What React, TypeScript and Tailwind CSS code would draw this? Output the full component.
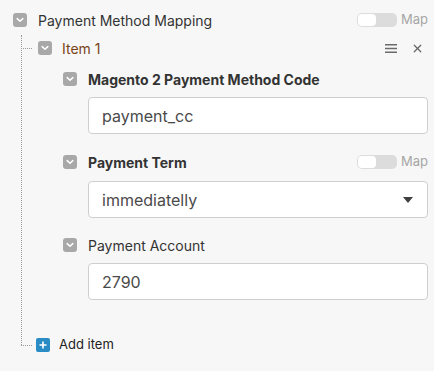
import { X } from "lucide-react";

type Field = {
  label: string;
  value: string;
  bold: boolean;
  mapToggle: boolean;
  select: boolean;
};

const fields: Field[] = [
  { label: "Magento 2 Payment Method Code", value: "payment_cc", bold: true, mapToggle: false, select: false },
  { label: "Payment Term", value: "immediatelly", bold: true, mapToggle: true, select: true },
  { label: "Payment Account", value: "2790", bold: false, mapToggle: false, select: false },
];

function Collapse() {
  return (
    <span className="flex h-[14px] w-[14px] shrink-0 items-center justify-center rounded-[3px] bg-[#a8a8a8]">
      <svg width="8" height="6" viewBox="0 0 8 6" fill="none">
        <path d="M1.2 1.6 4 4.3 6.8 1.6" stroke="#ffffff" strokeWidth="1.5" strokeLinecap="round" strokeLinejoin="round" />
      </svg>
    </span>
  );
}

function MapToggle() {
  return (
    <div className="ml-auto flex items-center">
      <span className="flex h-[14px] w-[40px] items-center rounded-[5px] bg-[#dcdcdc] px-[1px]">
        <span className="h-[12px] w-[18px] rounded-[4px] bg-white" />
      </span>
      <span className="ml-[4px] text-[13px] text-[#a6a6a6]">Map</span>
    </div>
  );
}

export default function App() {
  return (
    <div className="min-h-screen bg-[#f7f7f7] pl-[13px] pr-[6px] pt-[13px] font-['Inter',sans-serif] text-[#333333]">
      <div className="flex h-[14px] items-center">
        <Collapse />
        <span className="ml-[11px] text-[14px]">Payment Method Mapping</span>
        <MapToggle />
      </div>

      <div className="relative ml-[8px] mt-[8px] pt-[6px]">
        <span className="absolute bottom-[7px] left-0 top-0 border-l border-dotted border-[#9a9a9a]" />

        <div className="flex h-[14px] items-center">
          <span className="w-[11px] border-t border-dotted border-[#9a9a9a]" />
          <span className="ml-[6px]">
            <Collapse />
          </span>
          <span className="ml-[10px] text-[14px] text-[#7a4419]">Item 1</span>
          <div className="ml-auto mr-[4px] flex items-center gap-[14px] text-[#666666]">
            <svg width="12" height="9" viewBox="0 0 12 9">
              <rect x="0" y="0" width="12" height="1.5" fill="#6b6b6b" />
              <rect x="0" y="3.75" width="12" height="1.5" fill="#6b6b6b" />
              <rect x="0" y="7.5" width="12" height="1.5" fill="#6b6b6b" />
            </svg>
            <X size={13} strokeWidth={2.2} />
          </div>
        </div>

        <div className="pl-[42px] pt-[17px]">
          {fields.map((f, i) => (
            <div key={f.label} className={i === 0 ? "" : i === 1 ? "mt-[21px]" : "mt-[20px]"}>
              <div className="flex h-[14px] items-center">
                <Collapse />
                <span className={`ml-[11px] text-[14px] ${f.bold ? "font-bold" : ""}`}>{f.label}</span>
                {f.mapToggle ? <MapToggle /> : null}
              </div>
              <div
                className={`ml-[25px] flex h-[37px] items-center rounded-[4px] border border-[#cfcfcf] bg-white pl-[13px] pr-[14px] text-[16px] text-[#4a4a4a] ${
                  f.select ? "mt-[12px]" : "mt-[11px]"
                }`}
              >
                <span>{f.value}</span>
                {f.select ? (
                  <svg className="ml-auto" width="10" height="6" viewBox="0 0 10 6">
                    <path d="M0 0h10L5 6z" fill="#404040" />
                  </svg>
                ) : null}
              </div>
            </div>
          ))}
        </div>

        <div className="mt-[38px] flex h-[14px] items-center">
          <span className="w-[11px] border-t border-dotted border-[#9a9a9a]" />
          <span className="ml-[4px] flex h-[14px] w-[14px] items-center justify-center rounded-[2px] bg-[#2a8cc4]">
            <svg width="8" height="8" viewBox="0 0 8 8">
              <path d="M4 0.5v7M0.5 4h7" stroke="#ffffff" strokeWidth="1.6" />
            </svg>
          </span>
          <span className="ml-[9px] text-[13px] text-[#222222]">Add item</span>
        </div>
      </div>
    </div>
  );
}
